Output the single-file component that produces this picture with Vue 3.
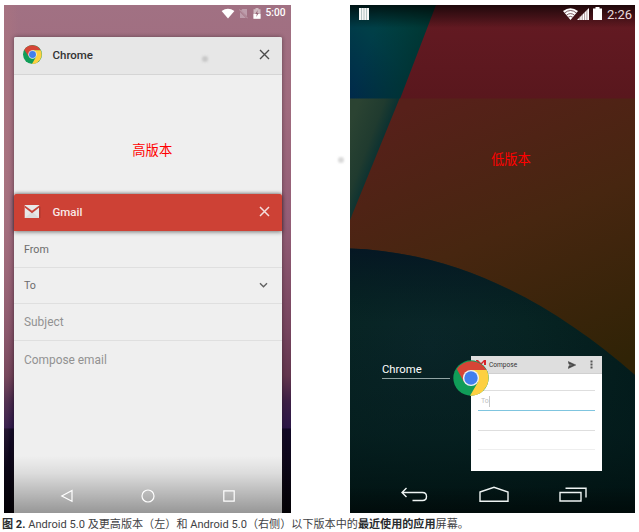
<script setup>
const fields = [
  { label: 'From', size: 'small', menu: false },
  { label: 'To', size: 'small', menu: true },
  { label: 'Subject', size: 'large', menu: false },
  { label: 'Compose email', size: 'large', menu: false },
]
</script>

<template>
  <figure class="figure">
    <div class="screens">
      <section class="phone modern">
        <div class="status">
          <svg width="14" height="12" viewBox="0 0 14 12"><path d="M.6 3Q7-1.7 13.4 3L7 10.6Z" fill="#fff" /></svg>
          <svg class="sim" width="9" height="11" viewBox="0 0 9 11"><path d="M3.4 1H8V8.3L2 2.6ZM1 4L7 10H1Z" fill="#bd9dab" /><path d="M.3 1.5 8.7 10.3" stroke="#c6abb5" stroke-width=".8" /></svg>
          <svg class="charge" width="8" height="11" viewBox="0 0 8 11"><path d="M2.5 0H5.5V1.2H7.5V10.7H.5V1.2H2.5Z" fill="#d1bcc3" /><path d="M.5 6H7.5V10.7H.5Z" fill="#fff" /><path d="M4.7 2 2.3 6H3.8L3.3 9 5.7 5H4.2Z" fill="#956576" /></svg>
          <span>5:00</span>
        </div>
        <article class="card chrome-card">
          <header class="card-head">
            <svg class="logo" width="19" height="19" viewBox="0 0 36 36">
              <circle cx="18" cy="18" r="18" fill="#109d58" />
              <path d="M2.4 9A18 18 0 0 1 33.6 10H18L10.8 21.8Z" fill="#d64536" />
              <path d="M33.6 10A18 18 0 0 1 17 36L25 22 18 10Z" fill="#fdd041" />
              <circle cx="18" cy="18" r="8" fill="#eee" /><circle cx="18" cy="18" r="6.6" fill="#427fed" />
            </svg>
            <b>Chrome</b>
            <i class="smudge"></i>
            <svg class="close" width="11" height="11" viewBox="0 0 11 11"><path d="M1 1 10 10M10 1 1 10" stroke="#4b4b4b" stroke-width="1.4" /></svg>
          </header>
          <div class="preview"><span class="note">高版本</span></div>
        </article>
        <article class="card gmail-card">
          <header class="card-head gmail-head">
            <svg class="logo" width="17" height="15" viewBox="0 0 17 15"><path d="M.7 1H15.2V14H.7Z" fill="#e8e8e8" /><path d="M.7 14 8 7.5 15.2 14Z" fill="#dcdcdc" /><path d="M.7 1.4V3.6L8 9.2 15.2 3.6V1.4L8 6.7Z" fill="#c94338" /><path d="M15.2 1.5 16.4 3V14H15.2Z" fill="#a9352d" /></svg>
            <b>Gmail</b>
            <svg class="close" width="11" height="11" viewBox="0 0 11 11"><path d="M1 1 10 10M10 1 1 10" stroke="#f4dedd" stroke-width="1.5" /></svg>
          </header>
          <div v-for="field in fields" :key="field.label" class="field" :class="field.size">
            <span>{{ field.label }}</span>
            <svg v-if="field.menu" width="9" height="7" viewBox="0 0 9 7"><path d="M1 1.3 4.5 4.8 8 1.3" fill="none" stroke="#616161" stroke-width="1.4" /></svg>
          </div>
        </article>
        <nav class="nav modern-nav">
          <svg width="14" height="14" viewBox="0 0 14 14"><path d="M12 1.5V12.3L1.8 7Z" /></svg>
          <svg width="14" height="14" viewBox="0 0 14 14"><circle cx="7" cy="7" r="6" /></svg>
          <svg width="14" height="14" viewBox="0 0 14 14"><path d="M1.8 1.8H12.2V12.2H1.8Z" /></svg>
        </nav>
      </section>

      <section class="phone classic">
        <svg class="wallpaper" width="285" height="508" viewBox="0 0 285 508" preserveAspectRatio="none">
          <defs>
            <linearGradient id="blue" x1="0" y1="1" x2="1" y2="0"><stop offset="0" stop-color="#00294a" /><stop offset=".45" stop-color="#003e48" /><stop offset="1" stop-color="#004c3e" /></linearGradient>
            <linearGradient id="shade" gradientUnits="userSpaceOnUse" x1="10" y1="65" x2="57" y2="82"><stop offset="0" stop-color="#002f32" stop-opacity="0" /><stop offset="1" stop-color="#00302d" stop-opacity=".7" /></linearGradient>
            <linearGradient id="olive" gradientUnits="userSpaceOnUse" x1="0" y1="120" x2="37" y2="134"><stop offset="0" stop-color="#2b4332" /><stop offset=".6" stop-color="#203b2f" /><stop offset="1" stop-color="#062f32" /></linearGradient>
            <linearGradient id="wine" x1="0" y1="0" x2="0" y2="1"><stop offset="0" stop-color="#651a23" /><stop offset="1" stop-color="#59171d" /></linearGradient>
            <linearGradient id="brown" gradientUnits="userSpaceOnUse" x1="80" y1="93" x2="200" y2="385"><stop offset="0" stop-color="#57201a" /><stop offset=".48" stop-color="#472610" /><stop offset="1" stop-color="#302306" /></linearGradient>
            <radialGradient id="sea" gradientUnits="userSpaceOnUse" cx="80" cy="340" r="245"><stop offset="0" stop-color="#0a2629" /><stop offset=".4" stop-color="#072423" /><stop offset="1" stop-color="#021a19" /></radialGradient>
            <linearGradient id="edge" x1="0" y1="0" x2="0" y2="1"><stop offset="0" stop-color="#051424" stop-opacity=".8" /><stop offset=".28" stop-color="#04191f" stop-opacity="0" /><stop offset=".7" stop-color="#041a1c" stop-opacity=".5" /><stop offset="1" stop-color="#000f0e" stop-opacity=".8" /></linearGradient>
            <linearGradient id="top" x1="0" y1="0" x2="0" y2="1"><stop offset="0" stop-opacity=".7" /><stop offset="1" stop-opacity="0" /></linearGradient>
          </defs>
          <path d="M0 0H90V94H0Z" fill="url(#blue)" /><path d="M0 0H90V94H0Z" fill="url(#shade)" />
          <path d="M0 93.5H60V220H0Z" fill="url(#olive)" />
          <path d="M86 0H285V94H50Z" fill="url(#wine)" />
          <path d="M49.5 93.5H285V385H0V215Z" fill="url(#brown)" />
          <path d="M0 243.5C108 247 203 298 285 370V508H0Z" fill="url(#sea)" />
          <path d="M0 243.5C108 247 203 298 285 370V508H0Z" fill="url(#edge)" />
          <path d="M0 0H285V23H0Z" fill="url(#top)" />
        </svg>
        <div class="status classic-status">
          <svg class="bars" width="10" height="12" viewBox="0 0 10 12"><path d="M0 0H10V12H0Z" fill="#f7f7f7" /><path d="M2.5 0V12M5 0V12M7.5 0V12" stroke="#879f9f" stroke-width=".6" /></svg>
          <svg width="26" height="12" viewBox="0 0 26 12"><path d="M0 3Q7.5-2.7 15 3L7.5 12Z" fill="#fff" /><path d="M1.5 5Q7.5 0 13.5 5M3.5 7.2Q7.5 4 11.5 7.2M5.2 9.2Q7.5 7.5 9.8 9.2" fill="none" stroke="#583039" stroke-width=".8" /><path d="M14 12 26 0V12Z" fill="#fff" /><path d="M16.8 8V12M19.2 6V12M21.6 4V12M23.9 2V12" stroke="#765158" stroke-width=".6" /></svg>
          <svg class="cell" width="9" height="13" viewBox="0 0 9 13"><path d="M2.5 0H6.5V1.5H9V13H0V1.5H2.5Z" fill="#fff" /></svg>
          <span>2:26</span>
        </div>
        <div class="low-note note">低版本</div>
        <div class="recent">
          <div class="recent-name">Chrome</div>
          <div class="thumb">
            <svg class="badge" width="36" height="36" viewBox="0 0 36 36">
              <circle cx="18" cy="18" r="17.7" fill="#109d58" />
              <path d="M3.8 9A17.7 17.7 0 0 1 33.6 10H18L10.8 21.8Z" fill="#d64536" />
              <path d="M33.6 10A17.7 17.7 0 0 1 17 35.7L25 22 18 10Z" fill="#fdd041" />
              <circle cx="18" cy="18" r="8.1" fill="#f0f2f2" /><circle cx="18" cy="18" r="6.7" fill="#427fed" />
            </svg>
            <header class="thumb-head">
              <svg class="mark" width="10" height="8" viewBox="0 0 10 8"><path d="M0 1H2L5 4 8 1H10V6H8V3L5 6 0 2Z" fill="#d9232a" /></svg>
              <span>Compose</span>
              <svg class="send" width="8" height="8" viewBox="0 0 8 8"><path d="M.2.5 7.8 4 .2 7.5 1 4.7 4.7 4 1 3.3Z" fill="#484848" stroke="#484848" stroke-width=".5" /></svg>
              <svg class="dots" width="3" height="9" viewBox="0 0 3 9"><path d="M.5.5H2.5V2.5H.5ZM.5 3.5H2.5V5.5H.5ZM.5 6.5H2.5V8.5H.5Z" fill="#555" /></svg>
            </header>
            <div class="line first"></div>
            <div class="line to"><span>To</span></div>
            <div class="line third"></div>
            <div class="line fourth"></div>
          </div>
        </div>
        <nav class="nav classic-nav">
          <svg width="28" height="16" viewBox="0 0 28 16"><path d="M6.5 1 2 5.5 6.5 10M2 5.5H22.5Q26.5 5.5 26.5 9.5T22.5 13.5H12.5" /></svg>
          <svg width="30" height="17" viewBox="0 0 30 17"><path d="M1 6 15 1.3 29 6V15.3H1Z" /></svg>
          <svg width="28" height="16" viewBox="0 0 28 16"><path d="M1 5.5H22V14H1ZM6.5 1.3H27V10.5" /></svg>
        </nav>
      </section>
      <i class="smudge between"></i>
    </div>
    <figcaption><b>图 2.</b> Android 5.0 及更高版本（左）和 Android 5.0（右侧）以下版本中的<b>最近使用的应用</b>屏幕。</figcaption>
  </figure>
</template>

<style>
body { background: #fff; }
</style>
<style scoped>
* { box-sizing: border-box; }
svg { display: block; flex: none; }
.figure { margin: 0; width: 639px; height: 532px; overflow: hidden; font-family: Roboto, "Noto Sans CJK SC", sans-serif; }
.screens { position: relative; display: flex; gap: 59px; padding: 4.5px 0 0 4px; height: 513px; }
.phone { position: relative; width: 287px; height: 508px; overflow: hidden; display: flex; flex-direction: column; }
.modern { padding: 0 9.5px 0 10px; background: radial-gradient(ellipse 16px 310px at 0 155px, #aa7480 0, #aa748000 100%), linear-gradient(180deg, #a17183 0, #a06b7e 20%, #935d76 43%, #76445e 64%, #63364e 73%, #3d2045 78%, #2b1647 83.2%, #120926 83.5%, #090511 95%, #050208 100%); }
.classic { width: 285px; isolation: isolate; }
.wallpaper { position: absolute; inset: 0; z-index: -1; }
.status { height: 32.5px; display: flex; align-items: flex-start; justify-content: flex-end; padding: 3px 0 0; color: #fff; font-size: 10.2px; font-weight: 500; line-height: 10px; }
.status .sim { margin-left: 4px; }
.status .charge { margin-left: 5px; }
.modern .status { margin-right: -4px; }
.modern .status span { margin-left: 4px; }
.card { box-shadow: 0 0 4px rgba(30,20,25,.48); background: #efefef; }
.chrome-card { height: 157.5px; flex: none; border-radius: 2px 2px 0 0; }
.card-head { height: 38px; display: flex; align-items: center; padding: 0 12px 1px 8.5px; background: #e7e7e7; border-bottom: 1px solid #d5d5d5; border-radius: 2px 2px 0 0; }
.card-head b { margin-left: 11px; font-size: 11.5px; font-weight: 500; color: #333; }
.card-head .close { margin-left: auto; }
.smudge { width: 6px; height: 6px; border-radius: 50%; background: #c8c8c8; filter: blur(1.3px); }
.card-head .smudge { margin: 8px 0 0 109px; }
.preview { display: flex; justify-content: center; padding: 65.5px 0 0 9px; }
.note { color: #f00; font: 13.3px/20px "Noto Sans CJK SC", sans-serif; }
.gmail-card { height: 320px; position: relative; background: #efefef; }
.gmail-card .card-head { height: 36.5px; padding-bottom: 2px; background: #cd4135; border: 0; box-shadow: 0 1px 4px rgba(0,0,0,.5); }
.gmail-card .card-head b { margin-left: 12px; color: #f9e9e8; }
.gmail-card .logo { margin-left: 1px; }
.field { height: 36.7px; display: flex; align-items: center; justify-content: space-between; padding: 1px 14px 0 10px; border-bottom: 1px solid #dfdfdf; color: #6c6c6c; font-size: 10.7px; }
.field.large { height: 37px; padding-top: 0; color: #929292; font-size: 11.9px; }
.field:last-child { border: 0; }
.nav { position: absolute; left: 0; right: 0; bottom: 0; display: flex; fill: none; stroke: #fff; stroke-width: 1.2; }
.modern-nav { height: 57px; padding: 33px 55.5px 0 56px; justify-content: space-between; background: linear-gradient(transparent 0, rgba(0,0,0,.08) 30%, rgba(0,0,0,.37) 100%); }
.classic-status { height: 23px; padding-left: 9px; padding-right: 3px; font-size: 13px; font-weight: 400; line-height: 13px; }
.classic-status .bars { margin: 0 auto 0 0; }
.classic-status .cell { margin-left: 4px; margin-top: -1px; }
.classic-status span { margin: 0 0 0 5px; color: #e9dcde; }
.low-note { margin: 121.5px 0 0 141px; }
.recent { display: flex; align-items: flex-start; padding-left: 32px; margin-top: 187px; }
.recent-name { width: 67.5px; height: 17px; margin-top: 5.5px; border-bottom: 1px solid #91a4a4; color: #fff; font-size: 11.3px; line-height: 16px; }
.thumb { position: relative; width: 131px; height: 115px; margin-left: 21.5px; background: #fff; }
.badge { position: absolute; left: -18.5px; top: 4px; }
.thumb-head { height: 18px; display: flex; align-items: center; padding: 0 9px 0 5px; background: #dedede; border-bottom: 1px solid #d0d0d0; color: #333; font-size: 6.6px; }
.thumb-head .mark { margin-top: -3px; }
.thumb-head span { margin-left: 3px; }
.thumb-head .send { margin-left: auto; }
.thumb-head .dots { margin-left: 14px; }
.line { margin: 0 7px; height: 20px; border-bottom: 1px solid #dedede; }
.line.first { height: 16.5px; }
.line.to { display: flex; align-items: center; padding: 2px 0 0 3px; border-color: #7fc5df; color: #c0c0c0; font-size: 7px; }
.line.to span { border-right: 1px solid #c8c8c8; line-height: 11px; }
.line.fourth { height: 19px; border-color: #eee; }
.classic-nav { padding: 0 48px 9.5px 50px; justify-content: space-between; align-items: flex-end; stroke-width: 1.4; stroke: #eef4f3; background: linear-gradient(transparent,rgba(0,0,0,.35)); }
.between { position: absolute; left: 338px; top: 157px; background: #d9d9d9; }
figcaption { padding: 4px 0 0 2px; height: 19px; white-space: nowrap; color: #3f4245; font-size: 11.1px; line-height: 16px; }
figcaption b { font-weight: 700; color: #292c2f; }
</style>
